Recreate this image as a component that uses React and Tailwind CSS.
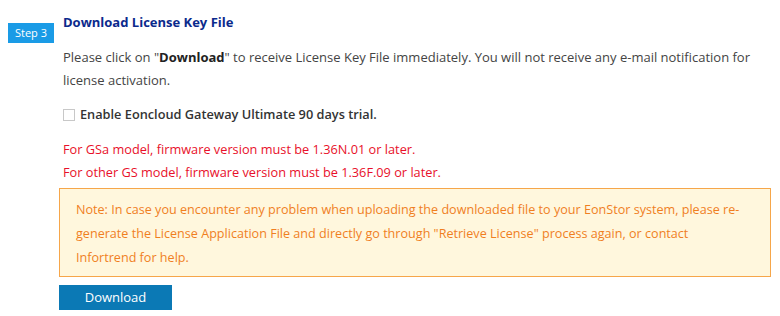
import React from 'react';

const App = () => {
  return (
    <div className="w-[780px] h-[316px] bg-white overflow-hidden font-['Open_Sans',sans-serif]">
      <div className="flex pt-[12px]">
        {/* step badge */}
        <div className="w-[63px] shrink-0 pl-[8px] pt-[11px]">
          <div className="w-[46px] h-[20px] bg-[#1a9be6] text-white text-[11px] leading-[20px] text-center">
            Step 3
          </div>
        </div>

        <div className="flex-1 pr-[9px]">
          <h2 className="text-[13px] font-bold text-[#0b2a8c] leading-[20px]">Download License Key File</h2>

          <p className="mt-[14px] text-[13px] leading-[23px] text-[#444] pr-[12px]">
            Please click on "<b className="text-[#222]">Download</b>" to receive License Key File immediately. You will not receive any e-mail notification for license activation.
          </p>

          <label className="flex items-center mt-[13px] gap-[5px] text-[12.75px] font-semibold text-[#333]">
            <span className="w-[12px] h-[12px] border border-[#c8c8c8] bg-white inline-block"></span>
            Enable Eoncloud Gateway Ultimate 90 days trial.
          </label>

          <div className="mt-[14px] text-[12.75px] leading-[23px] text-[#e8102a]">
            <p>For GSa model, firmware version must be 1.36N.01 or later.</p>
            <p>For other GS model, firmware version must be 1.36F.09 or later.</p>
          </div>

          <div className="-ml-[4px] mt-[4px] border border-[#f6a64a] bg-[#fff7dd] pl-[16px] pr-[8px] pt-[9px] pb-[6px] text-[12.6px] leading-[24px] text-[#f07f1f]">
            Note: In case you encounter any problem when uploading the downloaded file to your EonStor system, please re-<br />generate the License Application File and directly go through "Retrieve License" process again, or contact<br />Infortrend for help.
          </div>

          <button className="-ml-[4px] mt-[8px] w-[113px] h-[25px] bg-[#0b79b5] text-white text-[13px] leading-[25px]">
            Download
          </button>
        </div>
      </div>
    </div>
  );
};

export default App;
